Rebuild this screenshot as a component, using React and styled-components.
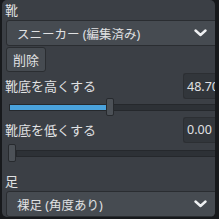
import React from "react";
import styled, { createGlobalStyle } from "styled-components";

const Global = createGlobalStyle`
  html, body { margin: 0; padding: 0; background: #17191c; }
  body { width: 219px; height: 219px; overflow: hidden; font-family: "Noto Sans", "Noto Sans CJK JP", sans-serif; }
`;

const Frame = styled.div`
  padding-left: 2px;
  width: 219px;
  height: 219px;
  box-sizing: border-box;
`;

const Panel = styled.div`
  width: 213px;
  height: 217px;
  background: #3b3f45;
  border-radius: 5px;
  overflow: hidden;
  display: flex;
  flex-direction: column;
  padding-left: 4px;
  box-sizing: border-box;
  color: #e0e1e3;
  font-size: 13px;
`;

const Label = styled.div`
  height: ${(p) => p.$h || 20}px;
  line-height: ${(p) => p.$h || 20}px;
  margin-top: ${(p) => p.$mt || 0}px;
  margin-left: -1px;
  white-space: nowrap;
`;

const Select = styled.div`
  flex: none;
  width: 212px;
  height: 26px;
  box-sizing: border-box;
  border: 1px solid #2a2d31;
  border-radius: 3px;
  background: #464b51;
  display: flex;
  align-items: center;
  justify-content: space-between;
  padding: 0 10px 0 10px;
  margin-top: ${(p) => p.$mt || 0}px;
  white-space: nowrap;
  font-size: 12.5px;
`;

const Button = styled.div`
  flex: none;
  width: 40px;
  height: 25px;
  box-sizing: border-box;
  border: 1px solid #2a2d31;
  border-radius: 3px;
  background: #464b51;
  display: flex;
  align-items: center;
  justify-content: center;
  margin-top: 1px;
`;

const Row = styled.div`
  display: flex;
  align-items: center;
  justify-content: space-between;
  height: 26px;
  margin-top: ${(p) => p.$mt || 0}px;
`;

const NumBox = styled.div`
  flex: none;
  width: 44px;
  height: 26px;
  box-sizing: border-box;
  border: 1px solid #2c2f33;
  border-right: none;
  border-radius: 3px 0 0 3px;
  background: #32363b;
  display: flex;
  align-items: center;
  padding-left: 3px;
  overflow: hidden;
  white-space: nowrap;
  margin-right: -12px;
  font-size: 12.5px;
`;

const SliderRow = styled.div`
  height: 18px;
  margin-top: ${(p) => p.$mt || 0}px;
  padding-left: ${(p) => p.$ml || 0}px;
  display: flex;
  align-items: center;
`;

const Track = styled.div`
  flex: 1;
  height: 7px;
  box-sizing: border-box;
  border: 1px solid #25282c;
  background: #2d3136;
  margin-right: -4px;
  position: relative;
`;

const Fill = styled.div`
  position: absolute;
  left: 0;
  top: 0;
  bottom: 0;
  background: #4aa2dc;
`;

const Thumb = styled.div`
  position: absolute;
  top: -7px;
  width: 8px;
  height: 18px;
  box-sizing: border-box;
  border: 1px solid #272a2e;
  border-radius: 2px;
  background: #4c5157;
`;

const Chevron = () => (
  <svg width="13" height="8" viewBox="0 0 13 8">
    <polyline points="1.5,1.5 6.5,6 11.5,1.5" fill="none" stroke="#eef0f2" strokeWidth="2.4" strokeLinecap="round" strokeLinejoin="round" />
  </svg>
);

const Slider = ({ fill, thumb, mt, ml }) => (
  <SliderRow $mt={mt} $ml={ml}>
    <Track>
      {fill > 0 && <Fill style={{ width: `${fill}px` }} />}
      <Thumb style={{ left: `${thumb}px` }} />
    </Track>
  </SliderRow>
);

export default function App() {
  return (
    <Frame>
      <Global />
      <Panel>
        <Label $h={17} $mt={2}>靴</Label>
        <Select $mt={1}>
          <span>スニーカー (編集済み)</span>
          <Chevron />
        </Select>
        <Button>削除</Button>
        <Row $mt={1}>
          <Label>靴底を高くする</Label>
          <NumBox>48.70</NumBox>
        </Row>
        <Slider fill={96} thumb={96} ml={3} />
        <Row>
          <Label>靴底を低くする</Label>
          <NumBox>0.00</NumBox>
        </Row>
        <Slider fill={0} thumb={-9} mt={2} ml={10} />
        <Label $h={20} $mt={9}>足</Label>
        <Select $mt={0}>
          <span>裸足 (角度あり)</span>
          <Chevron />
        </Select>
      </Panel>
    </Frame>
  );
}
